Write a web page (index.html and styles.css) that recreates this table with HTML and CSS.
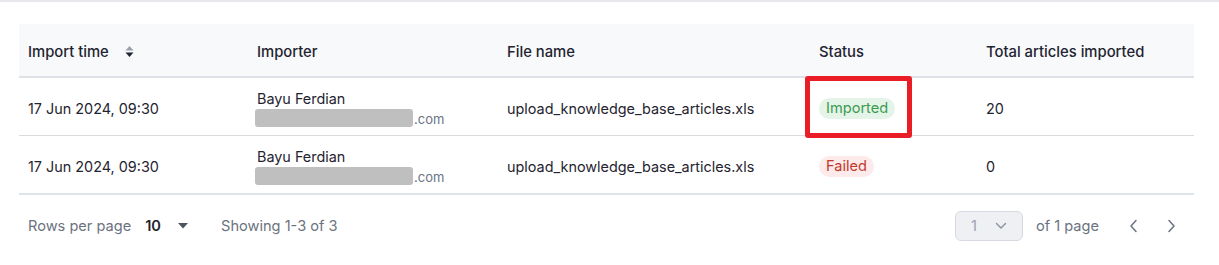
FILE: index.html
```html
<!DOCTYPE html>
<html lang="en">
<head>
    <meta charset="UTF-8">
    <title>Import history</title>
    <link rel="stylesheet" href="styles.css">
</head>
<body>

<div class="page">
    <table class="imports">
        <colgroup>
            <col class="c-time">
            <col class="c-importer">
            <col class="c-file">
            <col class="c-status">
            <col class="c-total">
        </colgroup>
        <thead>
            <tr>
                <th>
                    <span class="sortable">Import time
                        <svg class="sort" width="9" height="13" viewBox="0 0 9 13">
                            <path d="M4.5 1 L8.5 5.5 H0.5 Z" fill="#9aa1ac"/>
                            <path d="M4.5 12 L8.5 7.5 H0.5 Z" fill="#1f2430"/>
                        </svg>
                    </span>
                </th>
                <th>Importer</th>
                <th>File name</th>
                <th>Status</th>
                <th>Total articles imported</th>
            </tr>
        </thead>
        <tbody>
            <tr>
                <td>17 Jun 2024, 09:30</td>
                <td>
                    <div class="name">Bayu Ferdian</div>
                    <div class="email"><span class="blur"></span>.com</div>
                </td>
                <td>upload_knowledge_base_articles.xls</td>
                <td class="status-cell">
                    <span class="badge ok">Imported</span>
                    <span class="highlight-box"></span>
                </td>
                <td>20</td>
            </tr>
            <tr>
                <td>17 Jun 2024, 09:30</td>
                <td>
                    <div class="name">Bayu Ferdian</div>
                    <div class="email"><span class="blur"></span>.com</div>
                </td>
                <td>upload_knowledge_base_articles.xls</td>
                <td><span class="badge fail">Failed</span></td>
                <td>0</td>
            </tr>
        </tbody>
    </table>

    <div class="pager">
        <div class="pager-left">
            <span class="muted">Rows per page</span>
            <span class="rows">10
                <svg width="10" height="6" viewBox="0 0 10 6"><path d="M0 0 H10 L5 5.5 Z" fill="#4b5260"/></svg>
            </span>
            <span class="muted">Showing 1-3 of 3</span>
        </div>
        <div class="pager-right">
            <div class="page-select">
                <span>1</span>
                <svg width="12" height="8" viewBox="0 0 12 8"><path d="M1.5 1.5 L6 6 L10.5 1.5" fill="none" stroke="#8a919c" stroke-width="1.4" stroke-linecap="round" stroke-linejoin="round"/></svg>
            </div>
            <span class="muted">of 1 page</span>
            <span class="nav first">
                <svg width="10" height="14" viewBox="0 0 10 14"><path d="M7 1.5 L2 7 L7 12.5" fill="none" stroke="#6b7280" stroke-width="1.5" stroke-linecap="round" stroke-linejoin="round"/></svg>
            </span>
            <span class="nav">
                <svg width="10" height="14" viewBox="0 0 10 14"><path d="M3 1.5 L8 7 L3 12.5" fill="none" stroke="#6b7280" stroke-width="1.5" stroke-linecap="round" stroke-linejoin="round"/></svg>
            </span>
        </div>
    </div>
</div>

</body>
</html>
```

FILE: styles.css
```css
body {
    margin: 0;
    font-family: 'Inter', 'Noto Sans', sans-serif;
    color: #1f2430;
    background: #fff;
    border-top: 2px solid #e6e8ec;
}
.page {
    padding: 22px 25px 0 19px;
}
.imports {
    width: 1175px;
    border-collapse: collapse;
    table-layout: fixed;
    font-size: 14.4px;
}
.c-time { width: 229px; }
.c-importer { width: 250px; }
.c-file { width: 312px; }
.c-status { width: 167px; }
.c-total { width: 217px; }

.imports th {
    background-color: #f8f9fb;
    text-align: left;
    font-size: 14.8px;
    font-weight: 500;
    height: 49px;
    padding: 3px 9px 0;
    border-bottom: 2px solid #dee1e6;
}
.sortable {
    display: inline-flex;
    align-items: center;
}
.sort {
    margin-left: 16px;
}
.imports td {
    height: 53px;
    padding: 4px 9px 0;
    border-bottom: 1px solid #d9dadd;
    font-weight: 400;
}
.imports tbody tr:last-child td {
    border-bottom: 2px solid #dfe3ea;
}
.name {
    line-height: 20px;
    margin-top: -2px;
}
.email {
    display: flex;
    align-items: flex-end;
    font-size: 13px;
    color: #6b7280;
    line-height: 16px;
}
.blur {
    display: inline-block;
    width: 158px;
    height: 18px;
    background-color: #bfbfbf;
    border-radius: 3px;
    margin-left: -2px;
    margin-right: 1px;
}
.status-cell {
    position: relative;
}
.badge {
    display: inline-block;
    padding: 0 7px;
    height: 21px;
    line-height: 21px;
    border-radius: 11px;
    font-size: 14.6px;
}
.badge.ok {
    background-color: #e5f4e8;
    color: #3a9b4f;
}
.badge.fail {
    background-color: #fdeaea;
    color: #c0392b;
}
.highlight-box {
    position: absolute;
    left: -5px;
    top: -2px;
    width: 97px;
    height: 52px;
    border: 5px solid #ea1c26;
    border-radius: 3px;
}

.pager {
    display: flex;
    justify-content: space-between;
    align-items: center;
    width: 1175px;
    height: 62px;
    font-size: 14.6px;
}
.pager-left, .pager-right {
    display: flex;
    align-items: center;
}
.pager-left {
    padding-left: 9px;
}
.muted {
    color: #6b7280;
}
.rows {
    display: inline-flex;
    align-items: center;
    font-weight: 600;
    color: #1f2430;
    margin: 0 33px 0 14px;
}
.rows svg {
    margin-left: 17px;
}
.page-select {
    display: flex;
    align-items: center;
    box-sizing: border-box;
    width: 68px;
    height: 30px;
    padding: 0 0 0 15px;
    background-color: #eef0f3;
    border: 1px solid #d6dae0;
    border-radius: 6px;
    color: #9ca3af;
    margin-right: 13px;
}
.page-select svg {
    margin-left: 18px;
}
.nav {
    display: inline-flex;
    margin-left: 27px;
}
.nav.first {
    margin-left: 30px;
}
.nav:last-child {
    margin-right: 18px;
}
```
